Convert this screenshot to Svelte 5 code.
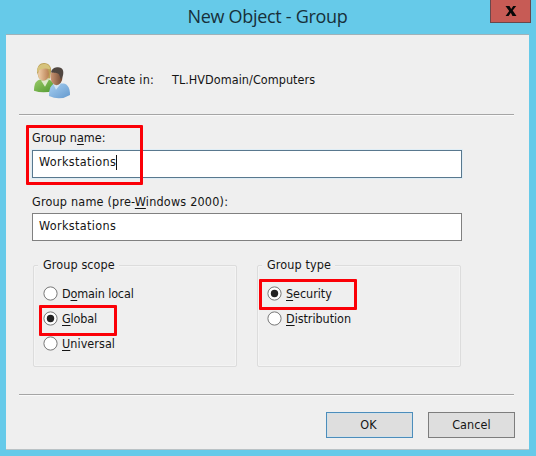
<script>
  let scope = $state('Global');
  let type = $state('Security');
  const scopes = [
    { value: 'Domain local', pre: 'D', key: 'o', post: 'main local' },
    { value: 'Global', pre: '', key: 'G', post: 'lobal' },
    { value: 'Universal', pre: '', key: 'U', post: 'niversal' }
  ];
  const types = [
    { value: 'Security', pre: '', key: 'S', post: 'ecurity' },
    { value: 'Distribution', pre: '', key: 'D', post: 'istribution' }
  ];
</script>

{#snippet radio(o, checked, pick)}
  <button class="radio" role="radio" aria-checked={checked} onclick={pick}>
    <svg width="15" height="15" viewBox="0 0 15 15">
      <circle cx="7.5" cy="7.5" r="6.6" fill="#fff" stroke="#777" />
      {#if checked}<circle cx="7.5" cy="7.5" r="3.7" fill="#222" />{/if}
    </svg>
    <span>{o.pre}<u>{o.key}</u>{o.post}</span>
    {#if checked}<i class="mark"></i>{/if}
  </button>
{/snippet}

<div class="window">
  <header>
    <h1>New Object - Group</h1>
    <button class="close" aria-label="Close">
      <svg width="12" height="10" viewBox="0 0 12 10"><path d="M.5 0h4L6.2 2.9 8.2 0h3L7.7 4.6 11.5 10h-4L5.8 6.8 3.6 10h-3L4.2 5z" fill="#080808" /></svg>
    </button>
  </header>
  <main>
    <div class="info">
      <svg class="people" width="38" height="37" viewBox="0 0 38 36" preserveAspectRatio="none">
        <defs>
          <linearGradient id="green" x2="1" y2="1"><stop stop-color="#9bcb69" /><stop offset="1" stop-color="#4f982e" /></linearGradient>
          <linearGradient id="blue" x2="1" y2="1"><stop stop-color="#a8d0f2" /><stop offset="1" stop-color="#6499ce" /></linearGradient>
          <linearGradient id="fair" x2="1"><stop stop-color="#f1d0ab" /><stop offset="1" stop-color="#b98053" /></linearGradient>
          <linearGradient id="tan" x2="1"><stop stop-color="#ce9875" /><stop offset="1" stop-color="#704832" /></linearGradient>
        </defs>
        <path d="M1 28c0-7 2-10 6-11h9c3 1 5 4 5 8v3q-11 3-20 0z" fill="url(#green)" />
        <path d="m8 18 4 6 4-7z" fill="#dfe9cb" />
        <path d="M4 10C4 4 7 1 11 1c5 0 8 4 7 9l-1 6H6z" fill="#bba057" />
        <ellipse cx="10.5" cy="11.5" rx="5.4" ry="6.8" fill="url(#fair)" />
        <path d="M4 10C4 5 7 2 11 2c4 0 6 2 6 5-5-1-9-1-13 3z" fill="#d6c37c" />
        <path d="M16 33c0-7 2-11 6-12h9c4 1 6 5 6 11q-10 6-21 1z" fill="url(#blue)" />
        <path d="m20 21 3 6 5-6z" fill="#d3e5f4" />
        <ellipse cx="23.5" cy="14.5" rx="6" ry="8.2" fill="url(#tan)" />
        <path d="M18 10c1-4 4-5 7-5 5 0 6 4 5 8l-2 4-2-5c-2-2-5-1-8-2z" fill="#504640" />
      </svg>
      <span class="create">Create in:</span>
      <span class="path">TL.HVDomain/Computers</span>
    </div>
    <hr />
    <section class="fields">
      <div class="label first">Group n<u>a</u>me:</div>
      <div class="input active"><span>Workstations</span><b class="caret"></b></div>
      <div class="label second">Group name (pre-<u>W</u>indows 2000):</div>
      <div class="input"><span>Workstations</span></div>
      <i class="mark"></i>
    </section>
    <div class="groups">
      <section class="box scope">
        <h2>Group scope</h2>
        {#each scopes as o}{@render radio(o, scope === o.value, () => (scope = o.value))}{/each}
      </section>
      <section class="box type">
        <h2>Group type</h2>
        {#each types as o}{@render radio(o, type === o.value, () => (type = o.value))}{/each}
      </section>
    </div>
    <hr />
    <footer><button class="ok">OK</button><button>Cancel</button></footer>
  </main>
</div>

<style>
  :global(body) { margin: 0; }
  * { box-sizing: border-box; }
  .window {
    width: 536px; height: 456px; overflow: hidden; padding: 0 7px 6px 6px;
    background: #66cae9; color: #151515;
    font: 12.5px/16px "DejaVu Sans Condensed", "DejaVu Sans", sans-serif; font-stretch: condensed;
    letter-spacing: 0;
  }
  header { height: 34px; display: grid; grid-template-columns: 1fr; position: relative; }
  h1 { margin: 4px 0 0; text-align: center; font: 18px/24px "Open Sans", sans-serif; letter-spacing: -.3px; color: #17303a; }
  .close { position: absolute; right: -2px; top: -2px; width: 41px; height: 25px; border: 1px solid #69484c; background: #c75b55; padding: 0; display: grid; place-items: center; }
  main { height: 416px; background: #efefef; border-top: 1px solid #9fb2b9; border-bottom: 1px solid #bac2c5; padding: 0 14px 0 13px; display: flex; flex-direction: column; }
  .info { height: 79px; display: flex; align-items: center; padding: 13px 0 0 14px; }
  .people { margin-right: 26px; margin-top: -2px; }
  .create { width: 75px; margin-top: -3px; letter-spacing: .2px; }
  .path { margin-top: -3px; letter-spacing: .05px; }
  hr { width: 495px; height: 2px; margin: 0; border: 0; border-top: 1px solid #a5a5a5; background: #fafafa; flex: none; }
  .fields { position: relative; padding: 14px 0 0 13px; height: 126px; }
  .label { height: 20px; }
  .second { margin-top: 16px; height: 19px; letter-spacing: .2px; }
  .input { width: 430px; height: 28px; border: 1px solid #808080; background: #fff; display: flex; padding: 4px 0 0 6px; letter-spacing: .35px; }
  .active { border-color: #59788e; box-shadow: 0 0 0 1px #dfedf5; padding-top: 3px; }
  .caret { width: 1px; height: 15px; margin: 1px 0 0 0; background: #111; }
  u { text-decoration-thickness: 1px; text-underline-offset: 2px; }
  .mark { position: absolute; border: 3px solid #fb0007; border-radius: 1px; pointer-events: none; }
  .fields > .mark { left: 7px; top: 9px; width: 117px; height: 60px; }
  .groups { display: flex; gap: 19px; padding: 15px 0 0 13px; height: 152px; }
  .box { position: relative; width: 205px; height: 110px; padding: 0 0 0 11px; display: flex; flex-direction: column; align-items: start; }
  .box::before { content: ""; position: absolute; inset: 8px 0 0 1px; border: 1px solid #dcdcdc; border-radius: 2px; box-shadow: inset 0 0 0 1px #f4f4f4; pointer-events: none; }
  h2 { position: relative; margin: 0 0 12px -5px; padding: 0 4px 0 5px; background: #efefef; font: inherit; letter-spacing: .1px; height: 16px; }
  button { font: inherit; letter-spacing: inherit; color: inherit; }
  .radio { position: relative; height: 25px; margin: 0; padding: 0 0 9px; border: 0; background: none; display: flex; align-items: center; gap: 4px; letter-spacing: -.15px; }
  .scope .radio:last-child { letter-spacing: .05px; }
  .radio span { position: relative; top: 1px; }
  .type .radio { letter-spacing: -.05px; }
  .scope .mark { left: -4px; top: -5px; width: 78px; height: 31px; }
  .type .mark { left: -8px; top: -6px; width: 98px; height: 31px; }
  footer { display: flex; justify-content: flex-end; gap: 15px; padding: 16px 0 0; }
  footer button { width: 87px; height: 26px; padding: 0; border: 1px solid #7d7d7d; background: #dedede; letter-spacing: .1px; }
  footer .ok { border-color: #4c8dbb; box-shadow: inset 0 0 0 1px #d3e0e7; padding-right: 2px; }
</style>
